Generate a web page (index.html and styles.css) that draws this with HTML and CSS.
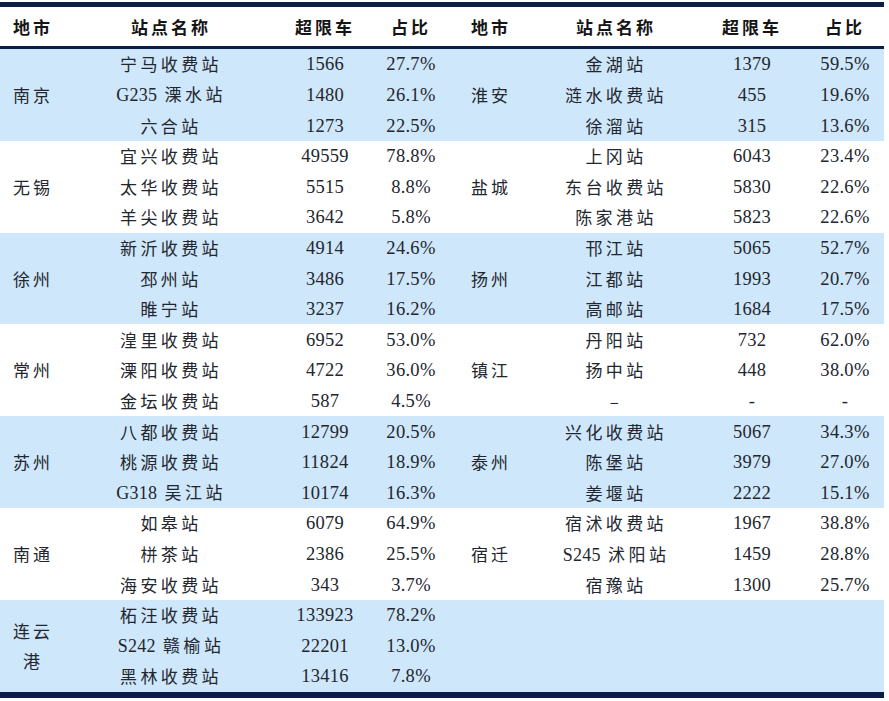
FILE: index.html
```html
<!DOCTYPE html>
<html lang="zh-CN">
<head>
<meta charset="utf-8">
<title>超限车站点统计</title>
<link rel="stylesheet" href="styles.css">
</head>
<body>
<table class="stats">
  <colgroup>
    <col class="c-city"><col class="c-name"><col class="c-num"><col class="c-pct">
    <col class="c-city2"><col class="c-name2"><col class="c-num2"><col class="c-pct2">
  </colgroup>
  <thead>
    <tr>
      <th>地市</th><th>站点名称</th><th>超限车</th><th>占比</th>
      <th>地市</th><th>站点名称</th><th>超限车</th><th>占比</th>
    </tr>
  </thead>
  <tbody class="band blue">
    <tr><td class="city" rowspan="3">南京</td><td class="name">宁马收费站</td><td class="num">1566</td><td class="num">27.7%</td>
        <td class="city" rowspan="3">淮安</td><td class="name">金湖站</td><td class="num">1379</td><td class="num">59.5%</td></tr>
    <tr><td class="name"><span class="lat">G235</span> 溧水站</td><td class="num">1480</td><td class="num">26.1%</td>
        <td class="name">涟水收费站</td><td class="num">455</td><td class="num">19.6%</td></tr>
    <tr><td class="name">六合站</td><td class="num">1273</td><td class="num">22.5%</td>
        <td class="name">徐溜站</td><td class="num">315</td><td class="num">13.6%</td></tr>
  </tbody>
  <tbody class="band white">
    <tr><td class="city" rowspan="3">无锡</td><td class="name">宜兴收费站</td><td class="num">49559</td><td class="num">78.8%</td>
        <td class="city" rowspan="3">盐城</td><td class="name">上冈站</td><td class="num">6043</td><td class="num">23.4%</td></tr>
    <tr><td class="name">太华收费站</td><td class="num">5515</td><td class="num">8.8%</td>
        <td class="name">东台收费站</td><td class="num">5830</td><td class="num">22.6%</td></tr>
    <tr><td class="name">羊尖收费站</td><td class="num">3642</td><td class="num">5.8%</td>
        <td class="name">陈家港站</td><td class="num">5823</td><td class="num">22.6%</td></tr>
  </tbody>
  <tbody class="band blue">
    <tr><td class="city" rowspan="3">徐州</td><td class="name">新沂收费站</td><td class="num">4914</td><td class="num">24.6%</td>
        <td class="city" rowspan="3">扬州</td><td class="name">邗江站</td><td class="num">5065</td><td class="num">52.7%</td></tr>
    <tr><td class="name">邳州站</td><td class="num">3486</td><td class="num">17.5%</td>
        <td class="name">江都站</td><td class="num">1993</td><td class="num">20.7%</td></tr>
    <tr><td class="name">睢宁站</td><td class="num">3237</td><td class="num">16.2%</td>
        <td class="name">高邮站</td><td class="num">1684</td><td class="num">17.5%</td></tr>
  </tbody>
  <tbody class="band white">
    <tr><td class="city" rowspan="3">常州</td><td class="name">湟里收费站</td><td class="num">6952</td><td class="num">53.0%</td>
        <td class="city" rowspan="3">镇江</td><td class="name">丹阳站</td><td class="num">732</td><td class="num">62.0%</td></tr>
    <tr><td class="name">溧阳收费站</td><td class="num">4722</td><td class="num">36.0%</td>
        <td class="name">扬中站</td><td class="num">448</td><td class="num">38.0%</td></tr>
    <tr><td class="name">金坛收费站</td><td class="num">587</td><td class="num">4.5%</td>
        <td class="name">–</td><td class="num">-</td><td class="num">-</td></tr>
  </tbody>
  <tbody class="band blue">
    <tr><td class="city" rowspan="3">苏州</td><td class="name">八都收费站</td><td class="num">12799</td><td class="num">20.5%</td>
        <td class="city" rowspan="3">泰州</td><td class="name">兴化收费站</td><td class="num">5067</td><td class="num">34.3%</td></tr>
    <tr><td class="name">桃源收费站</td><td class="num">11824</td><td class="num">18.9%</td>
        <td class="name">陈堡站</td><td class="num">3979</td><td class="num">27.0%</td></tr>
    <tr><td class="name"><span class="lat">G318</span> 吴江站</td><td class="num">10174</td><td class="num">16.3%</td>
        <td class="name">姜堰站</td><td class="num">2222</td><td class="num">15.1%</td></tr>
  </tbody>
  <tbody class="band white">
    <tr><td class="city" rowspan="3">南通</td><td class="name">如皋站</td><td class="num">6079</td><td class="num">64.9%</td>
        <td class="city" rowspan="3">宿迁</td><td class="name">宿沭收费站</td><td class="num">1967</td><td class="num">38.8%</td></tr>
    <tr><td class="name">栟茶站</td><td class="num">2386</td><td class="num">25.5%</td>
        <td class="name"><span class="lat">S245</span> 沭阳站</td><td class="num">1459</td><td class="num">28.8%</td></tr>
    <tr><td class="name">海安收费站</td><td class="num">343</td><td class="num">3.7%</td>
        <td class="name">宿豫站</td><td class="num">1300</td><td class="num">25.7%</td></tr>
  </tbody>
  <tbody class="band blue">
    <tr><td class="city" rowspan="3">连云港</td><td class="name">柘汪收费站</td><td class="num">133923</td><td class="num">78.2%</td>
        <td class="city" rowspan="3"></td><td class="name"></td><td class="num"></td><td class="num"></td></tr>
    <tr><td class="name"><span class="lat">S242</span> 赣榆站</td><td class="num">22201</td><td class="num">13.0%</td>
        <td class="name"></td><td class="num"></td><td class="num"></td></tr>
    <tr><td class="name">黑林收费站</td><td class="num">13416</td><td class="num">7.8%</td>
        <td class="name"></td><td class="num"></td><td class="num"></td></tr>
  </tbody>
</table>
</body>
</html>
```
FILE: styles.css
```css
html, body {
  margin: 0;
  padding: 0;
  background: #ffffff;
}

body {
  padding-top: 2px;
  font-family: "Liberation Serif", "Noto Sans CJK SC", serif;
  color: #22262e;
}

.stats {
  width: 884px;
  table-layout: fixed;
  border-collapse: separate;
  border-spacing: 0;
  border-bottom: 6px solid #0e1d47;
}

.c-city { width: 66px; }
.c-name { width: 210px; }
.c-num { width: 98px; }
.c-pct { width: 74px; }
.c-city2 { width: 86px; }
.c-name2 { width: 164px; }
.c-num2 { width: 108px; }
.c-pct2 { width: 78px; }

.stats th {
  height: 39px;
  padding: 0;
  border-top: 5px solid #0e1d47;
  border-bottom: 3px solid #0e1d47;
  font-family: "Noto Sans CJK SC", sans-serif;
  font-size: 17px;
  font-weight: 700;
  letter-spacing: 3px;
  color: #151515;
  text-align: center;
  box-sizing: content-box;
}

.stats td {
  height: 30.62px;
  padding: 0;
  text-align: center;
  vertical-align: middle;
}

.band.blue td {
  background: #cfe7fa;
}

.band.white td {
  background: #ffffff;
}

.city {
  padding: 0 12px !important;
  font-family: "Noto Sans CJK SC", sans-serif;
  font-size: 17px;
  letter-spacing: 3px;
  line-height: 30px;
  color: #22262e;
}

.name {
  font-family: "Noto Sans CJK SC", sans-serif;
  font-size: 17px;
  letter-spacing: 3.4px;
  line-height: 20px;
  color: #22262e;
}

.name .lat {
  font-family: "Liberation Serif", serif;
  font-size: 18px;
  letter-spacing: 0.3px;
}

.num {
  font-family: "Liberation Serif", serif;
  font-size: 18.5px;
  letter-spacing: 0.3px;
  line-height: 20px;
  color: #22262e;
}
```
